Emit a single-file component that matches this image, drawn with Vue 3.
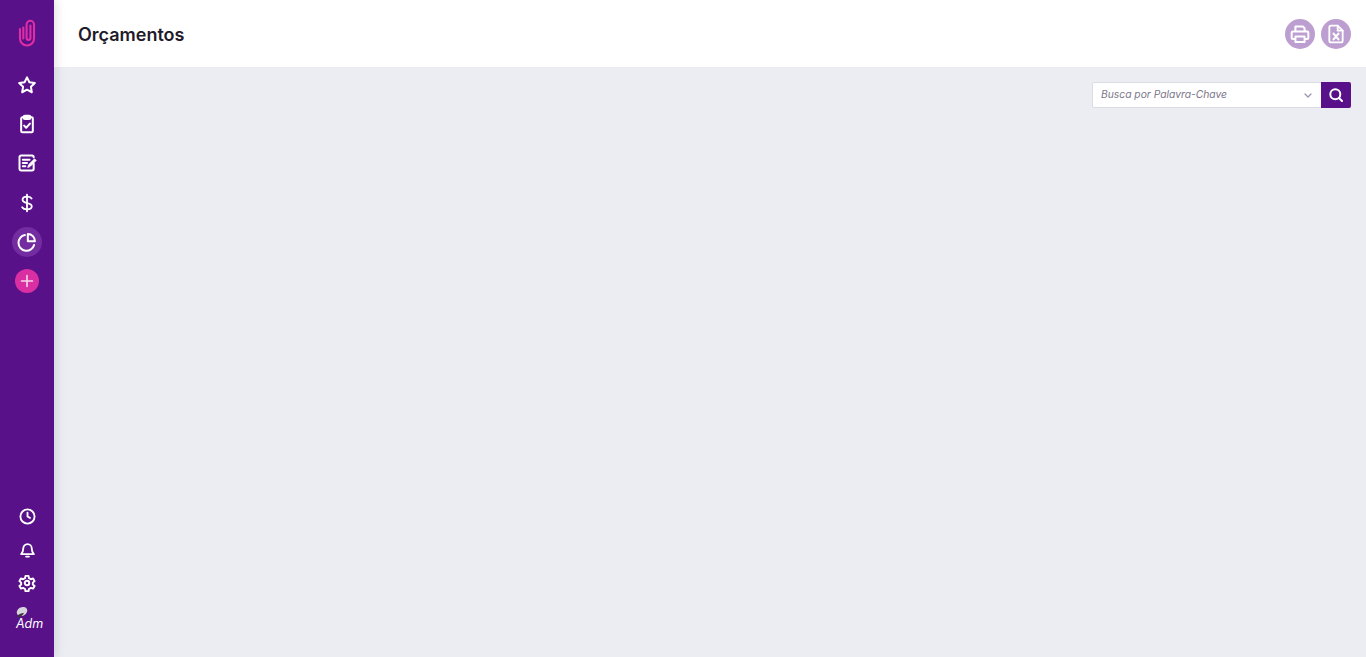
<script setup>
const searchLabel = 'Busca por Palavra-Chave'
</script>

<template>
  <div class="app">
    <aside class="sidebar">
      <div class="logo">
        <svg width="18" height="28" viewBox="0 0 18 28" fill="none" stroke="#e02da6" stroke-width="2.100" stroke-linecap="round">
          <path d="M2 10v9.500a7 7 0 0 0 14 0V5.500a3.700 3.700 0 0 0-7.400 0V19a1.900 1.900 0 0 0 3.800 0V6.500"/>
          <path d="M5.300 8.500V19.500"/>
        </svg>
      </div>
      <nav class="top-nav">
        <a class="item">
          <svg width="20" height="20" viewBox="0 0 24 24" fill="none" stroke="#fff" stroke-width="2.400" stroke-linejoin="round"><path d="M12 2.800l2.900 5.900 6.500.9-4.700 4.600 1.100 6.500-5.800-3.100-5.800 3.100 1.100-6.500-4.700-4.600 6.500-.9z"/></svg>
        </a>
        <a class="item">
          <svg width="20" height="20" viewBox="0 0 24 24" fill="none" stroke="#fff" stroke-width="2.400" stroke-linecap="round" stroke-linejoin="round"><path d="M8 4H6.500A1.500 1.500 0 0 0 5 5.500v15A1.500 1.500 0 0 0 6.500 22h11a1.500 1.500 0 0 0 1.500-1.500v-15A1.500 1.500 0 0 0 17.500 4H16"/><rect x="8" y="2" width="8" height="4" rx="1.500" fill="#fff"/><path d="M8.500 14l2.500 2.500 4.500-5"/></svg>
        </a>
        <a class="item">
          <svg width="20" height="20" viewBox="0 0 24 24" fill="none" stroke="#fff" stroke-width="2.400" stroke-linecap="round" stroke-linejoin="round"><path d="M20 13v6a2 2 0 0 1-2 2H5a2 2 0 0 1-2-2V5a2 2 0 0 1 2-2h13a2 2 0 0 1 2 2"/><path d="M7 8h8M7 12h5M7 16h3"/><path d="M13 17l1-3 7-7 2 2-7 7z" fill="#fff" stroke-width="1"/></svg>
        </a>
        <a class="item">
          <svg width="20" height="20" viewBox="0 0 24 24" fill="none" stroke="#fff" stroke-width="2.200" stroke-linecap="round" stroke-linejoin="round"><path d="M12 2v20"/><path d="M17.500 6.500c-1-1.500-3-2.200-5.500-2.200-3 0-5.300 1.500-5.300 3.800 0 5.400 11 2.500 11 7.800 0 2.300-2.500 3.800-5.700 3.800-2.600 0-4.800-.9-5.800-2.500"/></svg>
        </a>
        <a class="item active">
          <span class="active-dot">
            <svg width="20" height="20" viewBox="0 0 24 24" fill="none" stroke="#fff" stroke-width="2.400" stroke-linecap="round" stroke-linejoin="round"><path d="M20.500 15.500A9.500 9.500 0 1 1 9.500 3.700"/><path d="M13 2.500a8.500 8.500 0 0 1 8.500 8.500H13z"/></svg>
          </span>
        </a>
        <a class="item">
          <span class="add">
            <svg width="14" height="14" viewBox="0 0 14 14" stroke="#f3d7ea" stroke-width="1.600" stroke-linecap="round"><path d="M7 1.500v11M1.500 7h11"/></svg>
          </span>
        </a>
      </nav>
      <nav class="bottom-nav">
        <a class="item small">
          <svg width="17" height="17" viewBox="0 0 24 24" fill="none" stroke="#fff" stroke-width="2.600" stroke-linecap="round" stroke-linejoin="round"><circle cx="12" cy="12" r="10"/><path d="M12 6.500V12l3.500 2"/></svg>
        </a>
        <a class="item small">
          <svg width="17" height="17" viewBox="0 0 24 24" fill="none" stroke="#fff" stroke-width="2.600" stroke-linecap="round" stroke-linejoin="round"><path d="M3 18.500c2-1.800 3-3.500 3-8a6 6 0 0 1 12 0c0 4.500 1 6.200 3 8z"/><path d="M10 22h4"/></svg>
        </a>
        <a class="item small">
          <svg width="18" height="18" viewBox="0 0 24 24" fill="none" stroke="#fff" stroke-width="2.600" stroke-linecap="round" stroke-linejoin="round"><circle cx="12" cy="12" r="3"/><path d="M10 2.500h4l.6 3 2.600 1.500 2.900-1 2 3.500-2.300 2v2.500l2.300 2-2 3.500-2.900-1-2.600 1.500-.6 3h-4l-.6-3-2.600-1.500-2.900 1-2-3.500 2.300-2v-2.500l-2.300-2 2-3.500 2.900 1 2.600-1.500z"/></svg>
        </a>
        <div class="user">
          <svg class="user-pic" width="13" height="13" viewBox="0 0 13 13"><ellipse cx="7" cy="5.500" rx="5.500" ry="4.200" fill="#d8d4dc" transform="rotate(-30 7 5.500)"/><path d="M2 11c1-3 4-4 7-4-1 2-3 4-6 4.500z" fill="#3c3540"/></svg>
          <span class="user-name">Adm</span>
        </div>
      </nav>
    </aside>

    <div class="main">
      <header class="header">
        <h1>Orçamentos</h1>
        <div class="actions">
          <button class="round">
            <svg width="20" height="20" viewBox="0 0 24 24" fill="none" stroke="#fff" stroke-width="2.400" stroke-linejoin="round"><path d="M6.500 9V3h9l2 2v4"/><path d="M6.500 18H3.500a1.500 1.500 0 0 1-1.500-1.500v-6A1.500 1.500 0 0 1 3.500 9h17a1.500 1.500 0 0 1 1.500 1.500v6a1.500 1.500 0 0 1-1.500 1.500h-3"/><rect x="6.500" y="15" width="11" height="6.500"/></svg>
          </button>
          <button class="round">
            <svg width="20" height="20" viewBox="0 0 24 24" fill="none" stroke="#fff" stroke-width="2.200" stroke-linecap="round" stroke-linejoin="round"><path d="M14 2H6a2 2 0 0 0-2 2v16a2 2 0 0 0 2 2h12a2 2 0 0 0 2-2V8z"/><path d="M14 2v6h6"/><path d="M9 11.500l6 7M15 11.500l-6 7" stroke-width="2.600"/></svg>
          </button>
        </div>
      </header>
      <section class="content">
        <div class="search">
          <div class="select">
            <span class="placeholder">{{ searchLabel }}</span>
            <svg width="8" height="5" viewBox="0 0 8 5" fill="none" stroke="#9a8fb0" stroke-width="1.200" stroke-linecap="round" stroke-linejoin="round"><path d="M1 1l3 3 3-3"/></svg>
          </div>
          <button class="search-btn">
            <svg width="14" height="14" viewBox="0 0 14 14" fill="none" stroke="#fff" stroke-width="2" stroke-linecap="round"><circle cx="6.300" cy="6.300" r="5"/><path d="M10 10l3 3"/></svg>
          </button>
        </div>
      </section>
    </div>
  </div>
</template>

<style>
html, body {
  margin: 0;
  height: 100%;
  overflow: hidden;
}
</style>

<style scoped>
.app {
  display: flex;
  height: 657px;
  font-family: Inter, "Liberation Sans", sans-serif;
  background: #ebedf2;
}
.sidebar {
  width: 54px;
  flex-shrink: 0;
  background: #59118a;
  display: flex;
  flex-direction: column;
  align-items: center;
  box-shadow: 3px 0 8px rgba(60, 60, 90, 0.12);
  z-index: 1;
}
.logo {
  height: 65.500px;
  display: flex;
  align-items: center;
  justify-content: center;
}
.top-nav {
  display: flex;
  flex-direction: column;
}
.item {
  width: 54px;
  height: 39.200px;
  display: flex;
  align-items: center;
  justify-content: center;
}
.active-dot {
  width: 30px;
  height: 30px;
  border-radius: 50%;
  background: #742da1;
  display: flex;
  align-items: center;
  justify-content: center;
}
.add {
  width: 24px;
  height: 24px;
  border-radius: 50%;
  background: #d92fa3;
  display: flex;
  align-items: center;
  justify-content: center;
}
.bottom-nav {
  margin-top: auto;
  display: flex;
  flex-direction: column;
  padding-bottom: 27px;
}
.item.small {
  height: 33px;
}
.user {
  position: relative;
  height: 24px;
  margin-top: 7px;
  padding-left: 15px;
  font-size: 12.500px;
}
.user-pic {
  display: block;
}
.user-name {
  position: absolute;
  left: 16px;
  top: 10px;
  color: #fff;
  font-style: italic;
  line-height: 16px;
}
.main {
  flex: 1;
  display: flex;
  flex-direction: column;
  min-width: 0;
}
.header {
  height: 67px;
  background: #fff;
  display: flex;
  align-items: center;
  justify-content: space-between;
  padding: 0 15px 0 24px;
}
h1 {
  margin: 2px 0 0;
  font-size: 18px;
  font-weight: 600;
  color: #1f1b2a;
}
.actions {
  display: flex;
  gap: 6px;
}
.round {
  width: 30px;
  height: 30px;
  border: 0;
  padding: 0;
  border-radius: 50%;
  background: #bc9fd0;
  display: flex;
  align-items: center;
  justify-content: center;
}
.content {
  flex: 1;
  padding: 15px;
  display: flex;
  justify-content: flex-end;
  align-items: flex-start;
}
.search {
  display: flex;
}
.select {
  width: 229px;
  height: 26px;
  box-sizing: border-box;
  background: #fff;
  border: 1px solid #dcdde3;
  border-right: 0;
  border-radius: 2px 0 0 2px;
  display: flex;
  align-items: center;
  justify-content: space-between;
  padding: 0 9px 0 8px;
}
.placeholder {
  font-size: 10.300px;
  font-style: italic;
  color: #7c7689;
  margin-top: -3px;
}
.search-btn {
  width: 30px;
  height: 26px;
  border: 0;
  padding: 0;
  border-radius: 0 2px 2px 0;
  background: #59118a;
  display: flex;
  align-items: center;
  justify-content: center;
}
</style>
